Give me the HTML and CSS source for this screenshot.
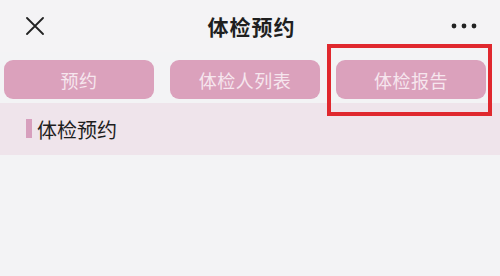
FILE: index.html
```html
<!DOCTYPE html>
<html lang="zh-CN">
<head>
<meta charset="utf-8">
<title>体检预约</title>
<link rel="stylesheet" href="styles.css">
</head>
<body>
<div class="page">
  <header class="header">
    <span class="close">
      <svg width="18" height="18" viewBox="0 0 18 18"><path d="M1 1 L17 17 M17 1 L1 17" stroke="#222" stroke-width="1.8" stroke-linecap="round" fill="none"/></svg>
    </span>
    <h1 class="title">体检预约</h1>
    <span class="more">
      <svg width="26" height="6" viewBox="0 0 26 6"><circle cx="3" cy="3" r="2.4" fill="#222"/><circle cx="13" cy="3" r="2.4" fill="#222"/><circle cx="23" cy="3" r="2.4" fill="#222"/></svg>
    </span>
  </header>
  <nav class="tabs">
    <div class="tab">预约</div>
    <div class="tab">体检人列表</div>
    <div class="tab">体检报告</div>
  </nav>
  <section class="band">
    <span class="bar"></span>
    <span class="band-title">体检预约</span>
  </section>
  <div class="highlight"></div>
</div>
</body>
</html>
```

FILE: styles.css
```css
html, body {
  margin: 0;
  padding: 0;
}
body {
  background: #f3f3f5;
  font-family: "Noto Sans CJK SC", "Noto Sans", sans-serif;
  width: 500px;
  height: 276px;
  overflow: hidden;
}
.page {
  position: relative;
  width: 500px;
  height: 276px;
  background: #f3f3f5;
}
.header {
  height: 52px;
  display: grid;
  grid-template-columns: 1fr auto 1fr;
  align-items: center;
  padding: 0 23px 0 26px;
  box-sizing: border-box;
  background: #f4f3f5;
}
.close {
  display: flex;
  justify-content: flex-start;
}
.close svg, .more svg { display: block; }
.title {
  margin: 0;
  font-size: 21px;
  font-weight: 700;
  color: #1f1f1f;
  line-height: 1;
  letter-spacing: 1px;
}
.more {
  display: flex;
  justify-content: flex-end;
  padding-bottom: 1px;
}
.tabs {
  display: flex;
  gap: 16px;
  padding: 0 14px 0 4px;
  margin-top: 8px;
}
.tab {
  width: 150px;
  height: 39px;
  border-radius: 9px;
  background: #dba1bc;
  color: #f6e6ee;
  font-size: 18px;
  display: flex;
  align-items: center;
  justify-content: center;
  letter-spacing: 0.5px;
}
.band {
  margin-top: 4px;
  height: 52px;
  background: #efe4eb;
  display: flex;
  align-items: center;
  padding-left: 26px;
  gap: 5px;
}
.bar {
  width: 6px;
  height: 19px;
  background: #d79fbd;
  margin-top: -2px;
}
.band-title {
  font-size: 20px;
  color: #1e1e1e;
  line-height: 1;
  margin-top: 2px;
}
.highlight {
  position: absolute;
  left: 327px;
  top: 44px;
  width: 165px;
  height: 72px;
  box-sizing: border-box;
  border: 4px solid #e0282e;
}
```
